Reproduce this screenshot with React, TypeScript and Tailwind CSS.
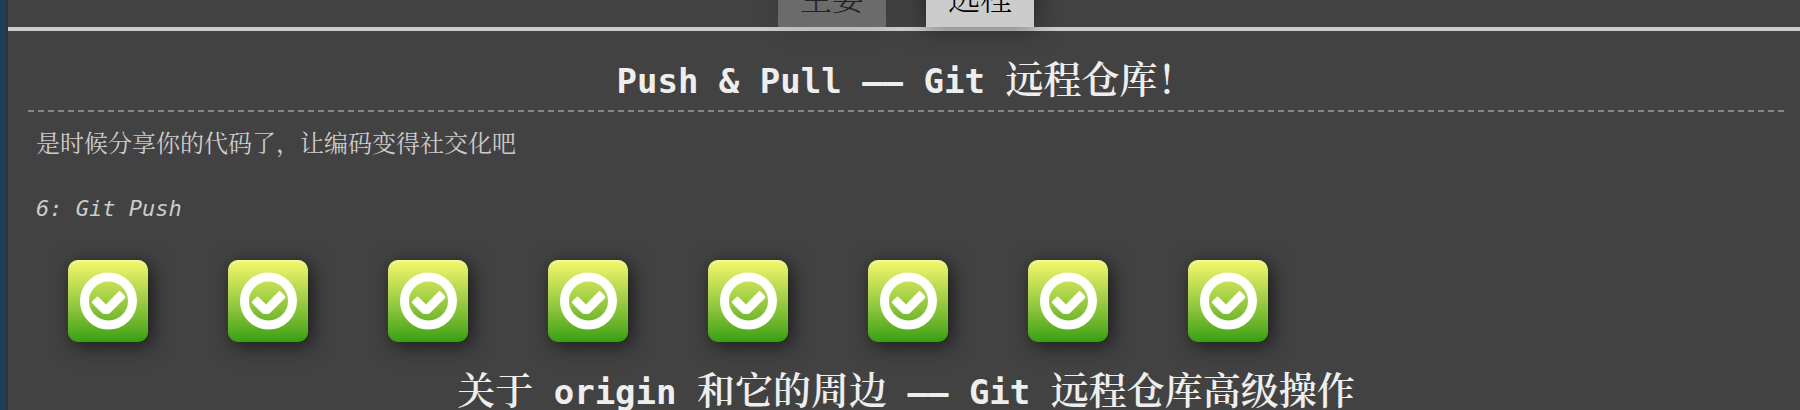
import React from "react";

type Level = { id: number; name: string };

const levels: Level[] = Array.from({ length: 8 }, (_, i) => ({
  id: i + 1,
  name: `${i + 1}`,
}));

function Latin({ children }: { children: string }) {
  return (
    <span className="font-['DejaVu_Sans_Mono',monospace] text-[34px] leading-none font-bold">
      {children}
    </span>
  );
}

function Tab({ label, active = false }: { label: string; active?: boolean }) {
  return (
    <button
      type="button"
      aria-pressed={active}
      className={
        active
          ? "bg-[#ccc] px-[22px] pt-0.5 pb-2.5 text-[32px] leading-[42px] font-light text-black shadow-[0_0_24px_rgba(0,0,0,0.5)]"
          : "bg-[#6b6b6b] px-[22px] pt-0.5 pb-2.5 text-[32px] leading-[42px] font-light text-[#222] shadow-[0_0_24px_rgba(0,0,0,0.15)]"
      }
    >
      {label}
    </button>
  );
}

function LevelButton({ level }: { level: Level }) {
  return (
    <button
      type="button"
      aria-label={level.name}
      className="flex h-[82px] w-20 items-center justify-center rounded-[10px] bg-linear-to-b from-[#f5f86c] to-[#34a010] shadow-[4px_4px_20px_rgba(0,0,0,0.6),inset_0_2px_1px_rgba(255,255,255,0.3)]"
    >
      <svg viewBox="0 0 58 58" className="h-[58px] w-[58px]" aria-hidden="true">
        <circle cx="29.5" cy="29" r="24" fill="none" stroke="#fff" strokeWidth="9" />
        <path
          d="M13.5 29 L17.5 25 Q18.5 24.2 19.5 25 L27 32.5 L39.5 19.5 Q40.5 18.5 41.5 19.5 L46 24 Q46.8 25 46 26 L31.5 40.5 Q30 42 28 42 L26 42 Q24 42 22.5 40.5 L13.5 31.5 Q12 30.2 13.5 29 Z"
          fill="#fff"
        />
      </svg>
    </button>
  );
}

export default function App() {
  return (
    <div className="flex h-screen overflow-hidden bg-[#1c3b52] font-['Noto_Serif_CJK_SC','Noto_Sans_CJK_SC',serif]">
      <div className="w-2 shrink-0 bg-linear-to-r from-[#1c3e57] from-70% to-[#333] to-80%" />
      <main className="min-w-0 flex-1 bg-[#424242] text-[#ccc]">
        <nav className="-mt-[27px] flex justify-center gap-10 border-b-4 border-[#ccc] pr-4 pl-5">
          <Tab label="主要" />
          <Tab label="远程" active />
        </nav>
        <section className="pr-4 pl-5">
          <h2 className="border-b-2 border-dashed border-[#888] pt-[18px] pb-1.5 text-center text-[38px] leading-[55px] font-semibold text-[#eee]">
            <Latin>Push &amp; Pull —— Git </Latin>远程仓库！
          </h2>
          <p className="px-2 pt-2.5 text-2xl leading-10">
            是时候分享你的代码了，让编码变得社交化吧
          </p>
          <p className="px-2 pt-[27px] font-['DejaVu_Sans_Mono',monospace] text-[22px] leading-10 italic">
            6: Git Push
          </p>
          <div className="flex gap-20 px-10 pt-[31px]">
            {levels.map((level) => (
              <LevelButton key={level.id} level={level} />
            ))}
          </div>
        </section>
        <section className="pr-4 pl-5">
          <h2 className="pt-[18px] text-center text-[38px] leading-[55px] font-semibold whitespace-nowrap text-[#eee]">
            关于<Latin> origin </Latin>和它的周边<Latin> —— Git </Latin>远程仓库高级操作
          </h2>
        </section>
      </main>
    </div>
  );
}
